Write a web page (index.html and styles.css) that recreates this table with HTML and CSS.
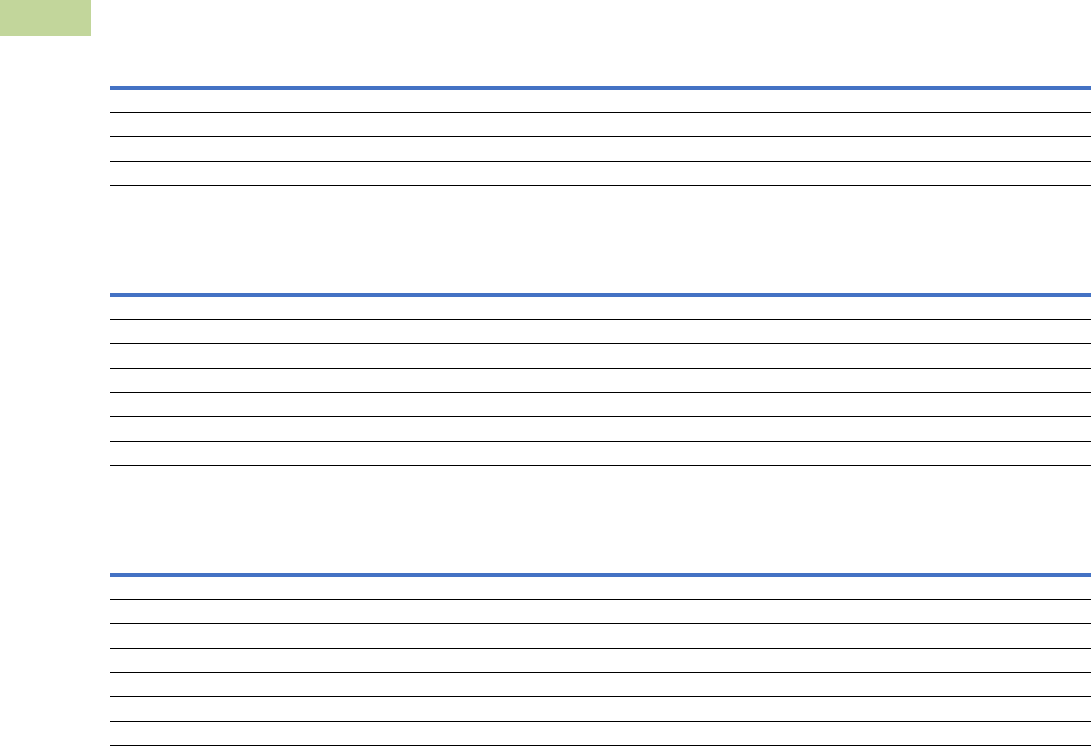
FILE: index.html
```html
<!DOCTYPE html>
<html>
<head>
<meta charset="utf-8">
<link rel="stylesheet" href="styles.css">
</head>
<body>
<div class="tag"></div>
<div class="sheet">
  <div class="table t1">
    <div class="row first"></div>
    <div class="row"></div>
    <div class="row"></div>
    <div class="row"></div>
  </div>
  <div class="table">
    <div class="row first"></div>
    <div class="row"></div>
    <div class="row"></div>
    <div class="row"></div>
    <div class="row"></div>
    <div class="row"></div>
    <div class="row"></div>
  </div>
  <div class="table">
    <div class="row first"></div>
    <div class="row"></div>
    <div class="row"></div>
    <div class="row"></div>
    <div class="row"></div>
    <div class="row"></div>
    <div class="row"></div>
  </div>
</div>
</body>
</html>
```

FILE: styles.css
```css
html, body {
  margin: 0;
  padding: 0;
  background: #ffffff;
  overflow: hidden;
  font-family: "Liberation Sans", Arial, sans-serif;
}
.tag {
  width: 91px;
  height: 36px;
  background: #c2d69b;
}
.sheet {
  display: flex;
  flex-direction: column;
  gap: 107px;
  padding: 50px 0 0 110px;
}
.table {
  display: flex;
  flex-direction: column;
  border-top: 4px solid #4472c4;
}
.row {
  height: 24.333px;
  box-sizing: border-box;
  border-bottom: 1px solid #000000;
  flex: none;
}
.row.first {
  height: 23px;
}
```
